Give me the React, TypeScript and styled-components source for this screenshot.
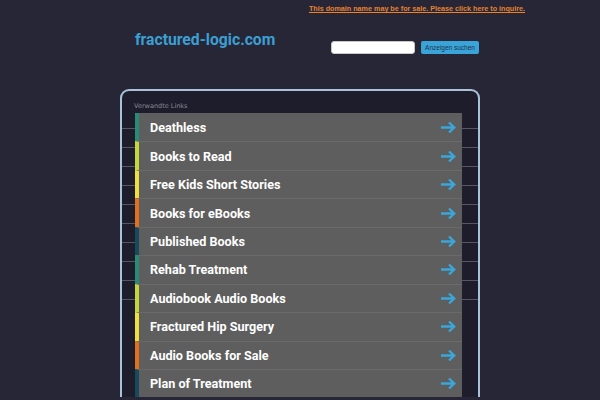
import React from 'react';
import styled, { createGlobalStyle } from 'styled-components';

const GlobalStyle = createGlobalStyle`
  html, body {
    margin: 0;
    padding: 0;
    background: #272637;
  }
  body {
    font-family: Roboto, "Liberation Sans", sans-serif;
  }
`;

const TopBar = styled.div`
  width: 450px;
  height: 20px;
  margin: 0 auto;
  padding-top: 4px;
  box-sizing: border-box;
  text-align: right;
  font-size: 7.2px;
  line-height: 10px;
`;

const SaleLink = styled.a`
  font-family: "Liberation Sans", Arial, sans-serif;
  font-size: 7.2px;
  font-weight: bold;
  line-height: 10px;
  color: #e8822c;
  text-decoration: underline;
  cursor: pointer;
`;

const Header = styled.div`
  width: 360px;
  height: 69px;
  margin: 0 auto;
  display: flex;
  align-items: flex-start;
`;

const Logo = styled.div`
  margin: 11px 0 0 15px;
  font-family: Roboto, sans-serif;
  font-weight: bold;
  font-size: 15.7px;
  line-height: 18px;
  color: #3b9fd1;
`;

const SearchForm = styled.form`
  margin: 21px 0 0 auto;
  display: flex;
  gap: 6px;
  padding-right: 1px;
`;

const SearchInput = styled.input`
  width: 84px;
  height: 13px;
  box-sizing: border-box;
  border: 1px solid #c8c8c8;
  border-radius: 3px;
  background: #fff;
  padding: 0 3px;
  outline: none;
`;

const SearchButton = styled.button`
  width: 58px;
  height: 13px;
  padding: 0;
  border: none;
  border-radius: 2px;
  background: #3aa3d7;
  color: #1b3550;
  font-family: "Liberation Sans", Arial, sans-serif;
  font-size: 6.5px;
  line-height: 13px;
  cursor: pointer;
`;

const Panel = styled.div`
  width: 360px;
  margin: 0 auto;
  box-sizing: border-box;
  border: 2px solid #a9c2da;
  border-bottom: none;
  border-radius: 9px 9px 0 0;
  background: #1e1d2b;
  padding-top: 11px;
`;

const PanelTitle = styled.div`
  font-family: "DejaVu Sans", sans-serif;
  font-size: 6.5px;
  line-height: 8px;
  color: #8a8a96;
  padding-left: 12px;
  margin-bottom: 3px;
`;

const ListArea = styled.div`
  padding: 0 6px 0 4px;
  background-image: repeating-linear-gradient(
    to bottom,
    #565664 0 1px,
    transparent 1px 19px
  );
  background-size: 100% 180px;
  background-position: 0 15px;
  background-repeat: no-repeat;
`;

const List = styled.ul`
  list-style: none;
  margin: 0 10px 0 9px;
  padding: 0;
`;

const Row = styled.li<{ $accent: string }>`
  display: flex;
  align-items: center;
  height: 28.45px;
  box-sizing: border-box;
  background: #5e5e5e;
  border-left: 4px solid ${(p) => p.$accent};
  border-top: 1px solid #6a6a6a;
  &:first-child {
    border-top: none;
  }
  padding: 0 5px 0 11px;
  cursor: pointer;
`;

const RowText = styled.span`
  flex: 1;
  font-family: Roboto, sans-serif;
  font-weight: bold;
  font-size: 12.6px;
  color: #fff;
`;

const Arrow = () => (
  <svg width="17" height="13" viewBox="0 0 17 13">
    <path
      d="M1 6.5h13M9 1.5l5.2 5-5.2 5"
      fill="none"
      stroke="#3ba6da"
      strokeWidth="2.4"
      strokeLinecap="butt"
      strokeLinejoin="miter"
    />
  </svg>
);

const accents = ['#2a8a78', '#c6d63a', '#f0de3a', '#e0701e', '#174a5c'];

const links = [
  'Deathless',
  'Books to Read',
  'Free Kids Short Stories',
  'Books for eBooks',
  'Published Books',
  'Rehab Treatment',
  'Audiobook Audio Books',
  'Fractured Hip Surgery',
  'Audio Books for Sale',
  'Plan of Treatment',
];

const App: React.FC = () => {
  return (
    <>
      <GlobalStyle />
      <TopBar>
        <SaleLink>This domain name may be for sale. Please click here to inquire.</SaleLink>
      </TopBar>
      <Header>
        <Logo>fractured-logic.com</Logo>
        <SearchForm onSubmit={(e) => e.preventDefault()}>
          <SearchInput type="text" />
          <SearchButton type="submit">Anzeigen suchen</SearchButton>
        </SearchForm>
      </Header>
      <Panel>
        <PanelTitle>Verwandte Links</PanelTitle>
        <ListArea>
          <List>
            {links.map((label, i) => (
              <Row key={label} $accent={accents[i % accents.length]}>
                <RowText>{label}</RowText>
                <Arrow />
              </Row>
            ))}
          </List>
        </ListArea>
      </Panel>
    </>
  );
};

export default App;
